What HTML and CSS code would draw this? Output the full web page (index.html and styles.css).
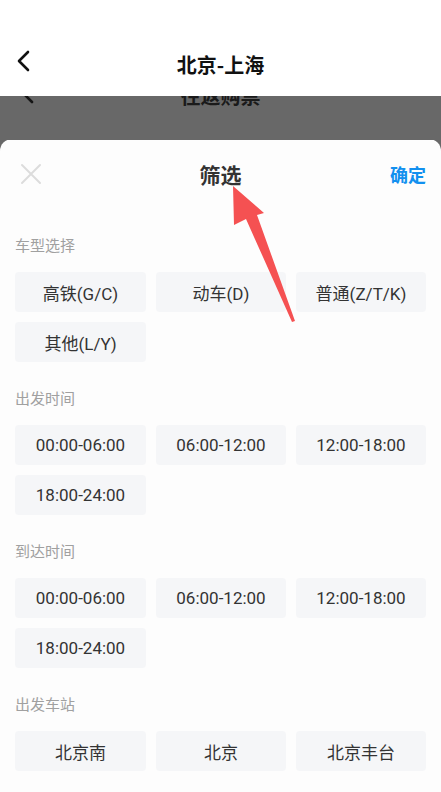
FILE: index.html
```html
<!DOCTYPE html>
<html lang="zh-CN">
<head>
<meta charset="utf-8">
<title>筛选</title>
<link rel="stylesheet" href="styles.css">
</head>
<body>
<div class="page">
  <header class="topbar">
    <svg class="back" width="16" height="22" viewBox="0 0 16 22"><path d="M12 2 L3 11 L12 20" fill="none" stroke="#111" stroke-width="2.6" stroke-linecap="round" stroke-linejoin="round"/></svg>
    <h1 class="title">北京-上海</h1>
  </header>
  <div class="dim">
    <div class="under">
      <svg class="under-back" width="16" height="22" viewBox="0 0 16 22"><path d="M12 2 L3 11 L12 20" fill="none" stroke="#141414" stroke-width="2.6" stroke-linecap="round" stroke-linejoin="round"/></svg>
      <span class="under-title">往返购票</span>
    </div>
  </div>
  <section class="sheet">
    <div class="sheet-head">
      <svg class="close" width="22" height="22" viewBox="0 0 22 22"><path d="M2 2 L20 20 M20 2 L2 20" stroke="#dcdcdc" stroke-width="2" stroke-linecap="round"/></svg>
      <h2 class="sheet-title">筛选</h2>
      <span class="ok">确定</span>
    </div>

    <div class="group">
      <div class="label">车型选择</div>
      <div class="opts">
        <div class="opt">高铁(G/C)</div>
        <div class="opt">动车(D)</div>
        <div class="opt">普通(Z/T/K)</div>
        <div class="opt">其他(L/Y)</div>
      </div>
    </div>

    <div class="group">
      <div class="label">出发时间</div>
      <div class="opts">
        <div class="opt">00:00-06:00</div>
        <div class="opt">06:00-12:00</div>
        <div class="opt">12:00-18:00</div>
        <div class="opt">18:00-24:00</div>
      </div>
    </div>

    <div class="group">
      <div class="label">到达时间</div>
      <div class="opts">
        <div class="opt">00:00-06:00</div>
        <div class="opt">06:00-12:00</div>
        <div class="opt">12:00-18:00</div>
        <div class="opt">18:00-24:00</div>
      </div>
    </div>

    <div class="group">
      <div class="label">出发车站</div>
      <div class="opts">
        <div class="opt">北京南</div>
        <div class="opt">北京</div>
        <div class="opt">北京丰台</div>
      </div>
    </div>
  </section>
  <svg class="pointer" width="441" height="792" viewBox="0 0 441 792">
    <polygon points="233,186 264,213 257,215 295,321 292,322 246,219 234,225" fill="#f55152"/>
  </svg>
</div>
</body>
</html>
```

FILE: styles.css
```css
* { box-sizing: border-box; }
html, body {
  margin: 0;
  padding: 0;
  background: #686868;
}
body {
  font-family: Roboto, "Noto Sans CJK SC", sans-serif;
  width: 441px;
  height: 792px;
  overflow: hidden;
}
.page {
  position: relative;
  width: 441px;
  height: 792px;
  display: flex;
  flex-direction: column;
}
.topbar {
  height: 96px;
  background: #ffffff;
  display: flex;
  align-items: center;
  justify-content: center;
  padding-top: 34px;
  position: relative;
  z-index: 2;
}
.back {
  position: absolute;
  left: 16px;
  top: 50px;
}
.title {
  margin: 0;
  font-size: 20px;
  font-weight: 700;
  color: #111;
  line-height: 28px;
  font-family: "Noto Sans CJK SC", sans-serif;
}
.dim {
  height: 44px;
  background: #686868;
  overflow: hidden;
  position: relative;
}
.under {
  margin-top: -14px;
  height: 28px;
  display: flex;
  align-items: center;
  justify-content: center;
  position: relative;
}
.under-back {
  position: absolute;
  left: 20px;
  top: 0;
}
.under-title {
  font-family: "Noto Sans CJK SC", sans-serif;
  font-size: 20px;
  font-weight: 700;
  color: #1a1a1a;
  line-height: 28px;
}
.sheet {
  flex: 1;
  margin-top: -1px;
  background: #fdfdfd;
  border-radius: 12px 12px 0 0;
  padding: 0 15px;
}
.sheet-head {
  height: 70px;
  display: flex;
  align-items: center;
  justify-content: center;
  position: relative;
}
.close {
  position: absolute;
  left: 5px;
  top: 24px;
}
.sheet-title {
  margin: 0;
  font-family: "Noto Sans CJK SC", sans-serif;
  font-size: 21px;
  font-weight: 700;
  color: #333;
  line-height: 28px;
}
.ok {
  position: absolute;
  right: 0;
  top: 22px;
  font-family: "Noto Sans CJK SC", sans-serif;
  font-size: 18px;
  font-weight: 700;
  color: #1290ef;
  line-height: 26px;
}
.group {
  padding-top: 26px;
}
.label {
  font-family: "Noto Sans CJK SC", sans-serif;
  font-size: 15px;
  color: #a0a0a0;
  line-height: 20px;
  margin-bottom: 17px;
}
.opts {
  display: grid;
  grid-template-columns: 131px 130px 130px;
  column-gap: 10px;
  row-gap: 10px;
}
.opt {
  height: 40px;
  background: #f5f6f8;
  border-radius: 4px;
  display: flex;
  align-items: center;
  justify-content: center;
  font-size: 17px;
  color: #333;
}
.pointer {
  position: absolute;
  left: 0;
  top: 0;
  pointer-events: none;
  z-index: 3;
}
```
